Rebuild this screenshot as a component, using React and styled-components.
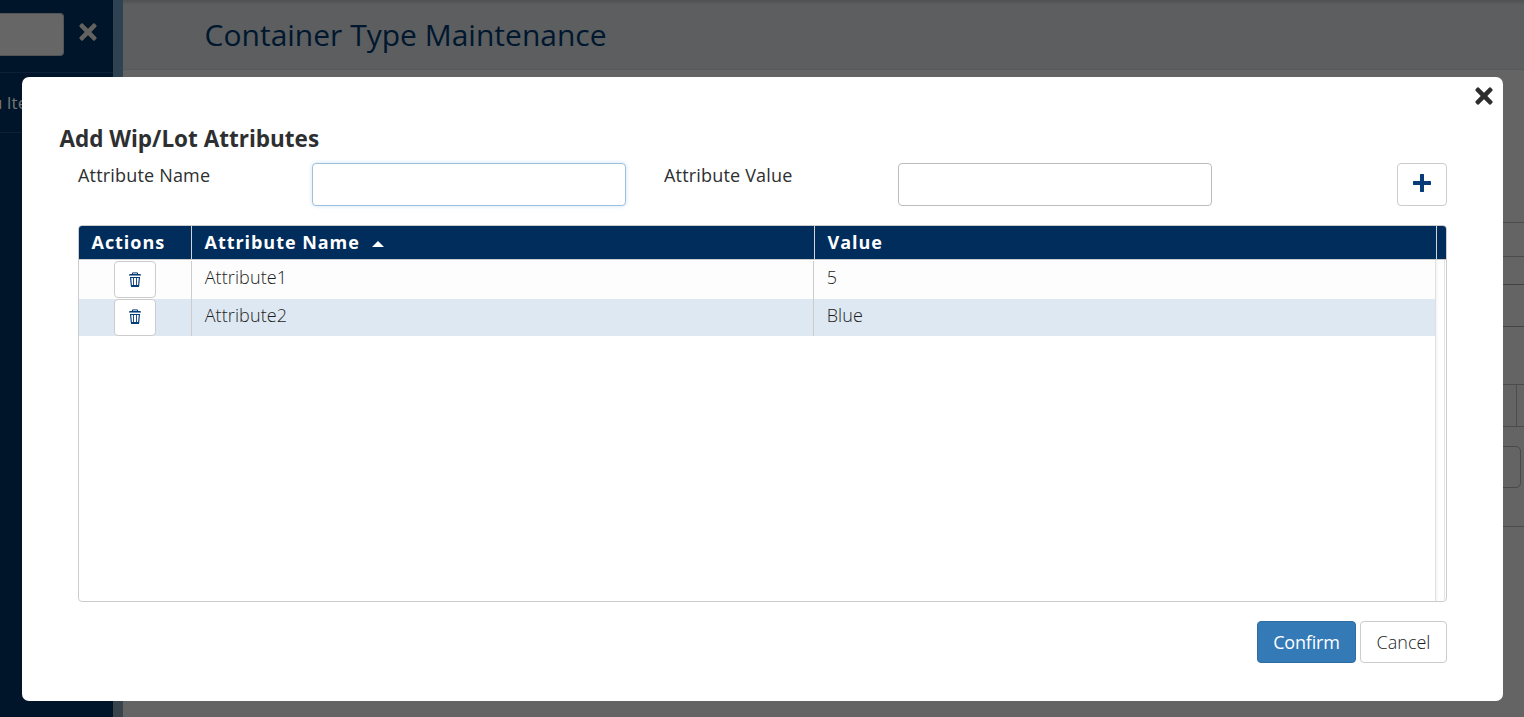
import React from "react";
import styled, { createGlobalStyle } from "styled-components";

const Global = createGlobalStyle`
  * { box-sizing: border-box; }
  html, body { margin: 0; height: 100%; overflow: hidden; }
  body { font-family: "Open Sans", "Noto Sans", sans-serif; color: #333; background: #656464; }
  button, input { font-family: inherit; }
`;

const Page = styled.div`
  display: flex;
  height: 717px;
  width: 1524px;
  overflow: hidden;
`;

const Sidebar = styled.aside`
  width: 113px;
  background: #001529;
`;

const SearchRow = styled.div`
  height: 73px;
  display: flex;
  padding-top: 13px;
  border-bottom: 1px solid #0b2236;
`;

const SearchBox = styled.div`
  width: 64px;
  height: 43px;
  background: #666;
  border: 1px solid #515354;
  border-left: 0;
  border-radius: 0 4px 4px 0;
`;

const SidebarClose = styled.div`
  margin: 10px 0 0 15px;
  height: 18px;
  color: #64625f;
`;

const MenuItem = styled.div`
  height: 60px;
  border-bottom: 1px solid #0b2236;
  font-size: 17px;
  line-height: 60px;
  color: #757575;
  white-space: nowrap;
  text-indent: -8px;
`;

const Gutter = styled.div`
  width: 10px;
  background: linear-gradient(#2d4252, #38434b);
`;

const Main = styled.main`
  flex: 1;
  background: #656464;
`;

const PageHeader = styled.header`
  height: 70px;
  padding-left: 81.6px;
  background: linear-gradient(#4e5052, #5c5e60 5px);
  border-bottom: 1px solid #575859;
`;

const PageTitle = styled.h1`
  margin: 0;
  font-size: 30px;
  font-weight: 400;
  line-height: 70px;
  color: #00172e;
`;

const Strip = styled.div`
  height: ${(p) => p.$height}px;
  border-bottom: 1px solid ${(p) => p.$line || "#4c4c4c"};
`;

const Cell = styled.div`
  width: 1394px;
  height: 100%;
  border-right: 1px solid #4c4c4c;
`;

const FieldStrip = styled(Strip)`
  padding-top: 19px;
`;

const DimField = styled.div`
  width: 1398px;
  height: 42px;
  border: 1px solid #494949;
  border-radius: 5px;
`;

const Dialog = styled.section`
  position: fixed;
  left: 22px;
  top: 77px;
  width: 1481px;
  height: 624px;
  padding: 47px 56px 0;
  background: #fff;
  border-radius: 7px;
`;

const DialogClose = styled.button`
  position: absolute;
  top: 10px;
  right: 10px;
  padding: 0;
  width: 18px;
  height: 18px;
  border: 0;
  background: none;
  color: #2d2d2d;
  display: flex;
`;

const DialogTitle = styled.h2`
  margin: 0 0 0 -18.6px;
  height: 39px;
  font-size: 22.5px;
  line-height: 30px;
  font-weight: 700;
  color: #2d2f30;
`;

const Form = styled.div`
  display: flex;
  align-items: flex-start;
`;

const Label = styled.label`
  width: ${(p) => p.$width}px;
  font-size: 18px;
  font-weight: 500;
  line-height: 24px;
  letter-spacing: 0.18px;
  color: #2d2f30;
`;

const Field = styled.input`
  width: 314px;
  height: 43px;
  margin-right: ${(p) => p.$gap}px;
  border: 1px solid ${(p) => (p.$active ? "#9fbfde" : "#bcbcbc")};
  border-radius: 4px;
  outline: 0;
  background: #fff;
  box-shadow: ${(p) => (p.$active ? "0 0 4px #cfe3f5" : "none")};
`;

const IconButton = styled.button`
  display: flex;
  align-items: center;
  justify-content: center;
  width: ${(p) => p.$w}px;
  height: ${(p) => p.$h}px;
  padding: 0 0 ${(p) => p.$lift || 0}px;
  border: 1px solid #ccc;
  border-radius: 4px;
  background: #fff;
  color: #063d79;
`;

const Grid = styled.div`
  width: 1369px;
  height: 377px;
  margin-top: 19px;
  border: 1px solid #ccc;
  border-radius: 4px;
  display: flex;
  flex-direction: column;
  overflow: hidden;
`;

const HeadRow = styled.div`
  display: flex;
  flex: none;
  height: 34px;
  background: #002d5c;
  border-bottom: 1px solid #ccc;
`;

const HeadCell = styled.div`
  width: ${(p) => p.$w}px;
  padding: 0 0 2px 12.5px;
  border-right: 1px solid #d4d4d4;
  display: flex;
  align-items: center;
  font-size: 18px;
  font-weight: 700;
  letter-spacing: 0.96px;
  line-height: 30px;
  color: #fff;
`;

const Sort = styled.span`
  margin: 5px 0 0 12px;
  border: 6px solid transparent;
  border-top: 0;
  border-bottom: 6px solid #fff;
`;

const GridBody = styled.div`
  flex: 1;
  display: flex;
`;

const Rows = styled.div`
  width: 1357px;
`;

const Row = styled.div`
  display: flex;
  height: ${(p) => p.$h}px;
  padding-top: ${(p) => p.$top}px;
  background: ${(p) => p.$bg};
`;

const ActionCell = styled.div`
  width: 113px;
  padding-left: 35px;
  border-right: 1px solid #ccc;
`;

const BodyCell = styled.div`
  width: ${(p) => p.$w}px;
  padding-left: 12.7px;
  border-right: ${(p) => (p.$last ? "0" : "1px solid #ccc")};
  font-size: 18px;
  font-weight: 300;
  line-height: 32px;
  letter-spacing: 0.1px;
  color: #1c1c1c;
`;

const ScrollTrack = styled.div`
  width: 10px;
  margin-left: -1px;
  border-left: 1px solid #e0e0e0;
  border-right: 1px solid #e4e4e4;
  background: linear-gradient(90deg, #f5f5f5, #fff 3px, #fdfdfd);
`;

const Footer = styled.footer`
  display: flex;
  justify-content: flex-end;
  gap: 4px;
  margin-top: 19px;
`;

const Button = styled.button`
  width: ${(p) => p.$w}px;
  height: 42px;
  padding: 0 0 1px;
  border: 1px solid ${(p) => (p.$primary ? "#2e6da4" : "#ccc")};
  border-radius: 4px;
  background: ${(p) => (p.$primary ? "#337ab7" : "#fff")};
  color: ${(p) => (p.$primary ? "#fff" : "#1c1c1c")};
  font-size: 18px;
  font-weight: ${(p) => (p.$primary ? 400 : 300)};
  letter-spacing: ${(p) => (p.$primary ? "-0.18px" : "0")};
`;

const Cross = () => (
  <svg width="18" height="18" viewBox="0 0 18 18" fill="currentColor">
    <path d="M3.700.6 9 5.700 14.300.6q.7-.6 1.400 0l1.700 1.700q.6.7 0 1.400L12.300 9l5.100 5.300q.6.7 0 1.400l-1.700 1.700q-.7.6-1.400 0L9 12.300 3.700 17.400q-.7.6-1.400 0L.6 15.700q-.6-.7 0-1.400L5.700 9 .6 3.700q-.6-.7 0-1.400L2.300.6q.7-.6 1.400 0z" />
  </svg>
);

const Plus = () => (
  <svg width="18" height="18" viewBox="0 0 18 18" fill="currentColor">
    <path d="M7.400 0h3.200q.4 0 .4.400V7h6.600q.4 0 .4.400v3.200q0 .4-.4.400H11v6.600q0 .4-.4.400H7.400q-.4 0-.4-.4V11H.4q-.4 0-.4-.4V7.400Q0 7 .4 7H7V.4q0-.4.4-.4z" />
  </svg>
);

const Trash = () => (
  <svg width="12" height="15" viewBox="0 0 12 15" fill="none" stroke="currentColor">
    <path d="M3.500 2.500V.9h5v1.600" />
    <path d="M.3 2.500h11.400" />
    <path d="M0 3.500h12" opacity=".55" />
    <path d="M1 5.500h10" />
    <path d="M1.600 5.500l.8 8.500M10.400 5.500l-.8 8.500" strokeWidth="1.200" />
    <path d="M4.500 6v7M7.500 6v7" strokeWidth=".9" />
    <path d="M2 14h8" strokeWidth="1.800" />
  </svg>
);

const rows = [
  { name: "Attribute1", value: "5", h: 39, top: 1, bg: "#fdfdfd", lift: 0 },
  { name: "Attribute2", value: "Blue", h: 37, top: 0, bg: "#dee8f2", lift: 2 },
];

export default function App() {
  return (
    <>
      <Global />
      <Page>
        <Sidebar>
          <SearchRow>
            <SearchBox />
            <SidebarClose><Cross /></SidebarClose>
          </SearchRow>
          <MenuItem>u Items</MenuItem>
        </Sidebar>
        <Gutter />
        <Main>
          <PageHeader>
            <PageTitle>Container Type Maintenance</PageTitle>
          </PageHeader>
          <Strip $height={153} />
          <Strip $height={34} />
          <Strip $height={28} $line="#424242" />
          <Strip $height={42} $line="#444" />
          <Strip $height={58} />
          <Strip $height={42}><Cell /></Strip>
          <FieldStrip $height={100}><DimField /></FieldStrip>
        </Main>
      </Page>
      <Dialog>
        <DialogClose aria-label="Close"><Cross /></DialogClose>
        <DialogTitle>Add Wip/Lot Attributes</DialogTitle>
        <Form>
          <Label $width={234}>Attribute Name</Label>
          <Field $active $gap={38} />
          <Label $width={234}>Attribute Value</Label>
          <Field $gap={185} />
          <IconButton $w={50} $h={43} $lift={3} aria-label="Add"><Plus /></IconButton>
        </Form>
        <Grid>
          <HeadRow>
            <HeadCell $w={113}>Actions</HeadCell>
            <HeadCell $w={623}>Attribute Name<Sort /></HeadCell>
            <HeadCell $w={622}>Value</HeadCell>
          </HeadRow>
          <GridBody>
            <Rows>
              {rows.map((r) => (
                <Row key={r.name} $h={r.h} $top={r.top} $bg={r.bg}>
                  <ActionCell>
                    <IconButton $w={42} $h={37} $lift={r.lift} aria-label="Delete"><Trash /></IconButton>
                  </ActionCell>
                  <BodyCell $w={622}>{r.name}</BodyCell>
                  <BodyCell $w={622} $last>{r.value}</BodyCell>
                </Row>
              ))}
            </Rows>
            <ScrollTrack />
          </GridBody>
        </Grid>
        <Footer>
          <Button $primary $w={99}>Confirm</Button>
          <Button $w={87}>Cancel</Button>
        </Footer>
      </Dialog>
    </>
  );
}
